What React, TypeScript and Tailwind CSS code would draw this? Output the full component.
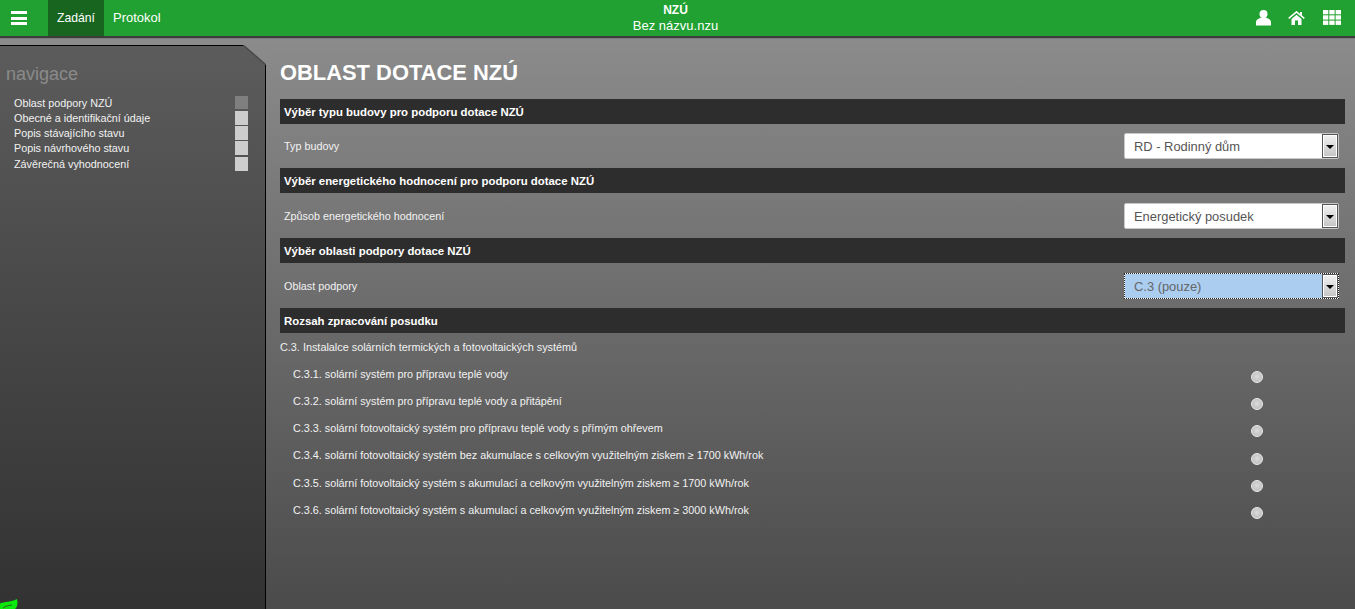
import React from "react";

const navItems = [
  { label: "Oblast podpory NZÚ", active: true },
  { label: "Obecné a identifikační údaje" },
  { label: "Popis stávajícího stavu" },
  { label: "Popis návrhového stavu" },
  { label: "Závěrečná vyhodnocení" },
];

const scopeItems = [
  "C.3.1. solární systém pro přípravu teplé vody",
  "C.3.2. solární systém pro přípravu teplé vody a přitápění",
  "C.3.3. solární fotovoltaický systém pro přípravu teplé vody s přímým ohřevem",
  "C.3.4. solární fotovoltaický systém bez akumulace s celkovým využitelným ziskem ≥ 1700 kWh/rok",
  "C.3.5. solární fotovoltaický systém s akumulací a celkovým využitelným ziskem ≥ 1700 kWh/rok",
  "C.3.6. solární fotovoltaický systém s akumulací a celkovým využitelným ziskem ≥ 3000 kWh/rok",
];

const UserIcon = () => (
  <svg width="15" height="16" viewBox="0 0 15 16" fill="#fff">
    <circle cx="7.5" cy="4" r="4" />
    <path d="M0 15.5 V12 C0 9.5 3 8.5 5 7.5 H10 C12 8.5 15 9.5 15 12 V15.5 Z" />
  </svg>
);

const HomeIcon = () => (
  <svg width="17" height="14" viewBox="0 0 17 14" fill="#fff">
    <path d="M0.7 7.3 L8.5 0.9 L16.3 7.3" fill="none" stroke="#fff" strokeWidth="1.6" />
    <rect x="12" y="1" width="2" height="3.5" />
    <path d="M3.5 8 L8.5 3.8 L13.5 8 V14 H10 V9.5 H7 V14 H3.5 Z" />
  </svg>
);

const GridIcon = () => (
  <svg width="18" height="15" viewBox="0 0 18 15" fill="#fff">
    <rect x="0" y="0" width="5.3" height="4.3" />
    <rect x="6.3" y="0" width="5.3" height="4.3" />
    <rect x="12.6" y="0" width="5.4" height="4.3" />
    <rect x="0" y="5.3" width="5.3" height="4.3" />
    <rect x="6.3" y="5.3" width="5.3" height="4.3" />
    <rect x="12.6" y="5.3" width="5.4" height="4.3" />
    <rect x="0" y="10.6" width="5.3" height="4.3" />
    <rect x="6.3" y="10.6" width="5.3" height="4.3" />
    <rect x="12.6" y="10.6" width="5.4" height="4.3" />
  </svg>
);

const SectionBar: React.FC<{ title: string }> = ({ title }) => (
  <div className="h-[25px] bg-[#2d2d2d] pt-[1px] pl-1 text-[11.4px] leading-[25px] font-bold text-white">
    {title}
  </div>
);

const SelectRow: React.FC<{ label: string; value: string; focused?: boolean }> = ({
  label,
  value,
  focused = false,
}) => (
  <div className="flex h-[44px] items-center justify-between pr-[6px] pl-1">
    <span className="pt-[1px] text-[10.8px] text-[#f2f2f2]">{label}</span>
    <div
      className={
        focused
          ? "flex h-[26px] w-[215px] items-stretch border border-dotted border-[#222] bg-white"
          : "flex h-[26px] w-[215px] items-stretch rounded-[2px] border border-[#c8c8c8] bg-white"
      }
    >
      <span
        className={
          focused
            ? "flex-1 bg-[#aacdf0] pl-[9px] text-[12.9px] leading-[25px] text-[#666]"
            : "flex-1 pl-[9px] text-[12.9px] leading-[25px] text-[#555]"
        }
      >
        {value}
      </span>
      <span className="flex w-[16px] items-center justify-center border border-[#555] bg-gradient-to-b from-[#f2f2f2] to-[#c4c4c4] shadow-[inset_0_0_0_1px_#fff]">
        <span className="mt-[1px] h-0 w-0 border-x-[4px] border-t-[4px] border-x-transparent border-t-black" />
      </span>
    </div>
  </div>
);

const App: React.FC = () => {
  return (
    <div className="flex h-[609px] w-[1355px] flex-col overflow-hidden bg-gradient-to-b from-[#909090] to-[#4b4b4b] font-['Liberation_Sans',Arial,sans-serif]">
      {/* Top bar */}
      <header className="relative flex h-[36px] shrink-0 items-stretch bg-[#21a131] text-white shadow-[0_2px_1px_rgba(40,40,40,0.8)]">
        <div className="flex w-[48px] items-center justify-center pr-[10px]">
          <div className="flex w-[16px] flex-col gap-[2.5px]">
            <span className="h-[3px] bg-white" />
            <span className="h-[3px] bg-white" />
            <span className="h-[3px] bg-white" />
          </div>
        </div>
        <div className="flex w-[56px] items-center justify-center bg-[#17651f] text-[12.2px]">Zadání</div>
        <div className="flex items-center pl-[9px] text-[13px]">Protokol</div>
        <div className="absolute top-[3px] left-0 w-[1351px] text-center leading-[15px]">
          <div className="text-[12px] font-bold">NZÚ</div>
          <div className="text-[13px]">Bez názvu.nzu</div>
        </div>
        <div className="ml-auto flex items-center gap-[17px] pr-[14px] pb-[1px]">
          <UserIcon />
          <HomeIcon />
          <span className="ml-[1px]">
            <GridIcon />
          </span>
        </div>
      </header>

      <div className="flex min-h-0 flex-1">
        {/* Navigation panel */}
        <aside className="relative mt-[9px] w-[266px] shrink-0 border-t border-r border-black bg-gradient-to-b from-[#5c5c5c] to-[#323232]">
          <svg className="absolute top-[-1px] right-[-1px]" width="23" height="20" viewBox="0 0 23 20">
            <polygon points="0,0 23,0 23,20" fill="#8a8a8a" />
            <line x1="0" y1="0" x2="23" y2="20" stroke="#4a4a4a" strokeWidth="1.5" />
          </svg>
          <div className="pt-[18px] pl-[6px] text-[18px] leading-[21px] text-[#8a8a8a]">navigace</div>
          <ul className="mt-[10px] pr-[17px] pl-[14px]">
            {navItems.map((item) => (
              <li key={item.label} className="flex h-[15.25px] items-center justify-between text-[10.8px] text-[#f2f2f2]">
                <span>{item.label}</span>
                <span className={item.active ? "h-[13px] w-[13px] bg-[#7f7f7f]" : "h-[14px] w-[13px] bg-[#cdcdcd]"} />
              </li>
            ))}
          </ul>
          <svg className="absolute bottom-0 left-0" width="18" height="10" viewBox="0 0 18 10">
            <path d="M0 4.5 C4 2.5 12 3 17 0 C18 4 17.5 8 15 10 L0 10 Z" fill="#0be80b" />
            <path d="M3 9 C6 6.5 9 6.5 12 6" fill="none" stroke="#2a5a2a" strokeWidth="1" />
          </svg>
        </aside>

        {/* Form */}
        <main className="min-w-0 flex-1 pr-[10px] pl-[14px]">
          <h1 className="pt-[24px] text-[21.9px] leading-[26px] font-bold text-white">OBLAST DOTACE NZÚ</h1>
          <div className="mt-[13px]">
            <SectionBar title="Výběr typu budovy pro podporu dotace NZÚ" />
            <SelectRow label="Typ budovy" value="RD - Rodinný dům" />
            <SectionBar title="Výběr energetického hodnocení pro podporu dotace NZÚ" />
            <div className="h-[1px]" />
            <SelectRow label="Způsob energetického hodnocení" value="Energetický posudek" />
            <SectionBar title="Výběr oblasti podpory dotace NZÚ" />
            <div className="h-[1px]" />
            <SelectRow label="Oblast podpory" value="C.3 (pouze)" focused />
            <SectionBar title="Rozsah zpracování posudku" />
            <div className="pt-[7px] text-[10.85px] leading-[14px] text-[#f2f2f2]">
              C.3. Instalalce solárních termických a fotovoltaických systémů
            </div>
            <ul className="mt-[9.4px]">
              {scopeItems.map((item) => (
                <li key={item} className="flex h-[27.2px] items-center justify-between pr-[82px] pl-[13px] text-[10.8px] text-[#f2f2f2]">
                  <span className="-mt-[6px]">{item}</span>
                  <span className="h-[12px] w-[12px] rounded-full border border-[#eee] bg-[radial-gradient(circle_at_50%_45%,#dcdcdc,#b4b4b4)]" />
                </li>
              ))}
            </ul>
          </div>
        </main>
      </div>
    </div>
  );
};

export default App;
